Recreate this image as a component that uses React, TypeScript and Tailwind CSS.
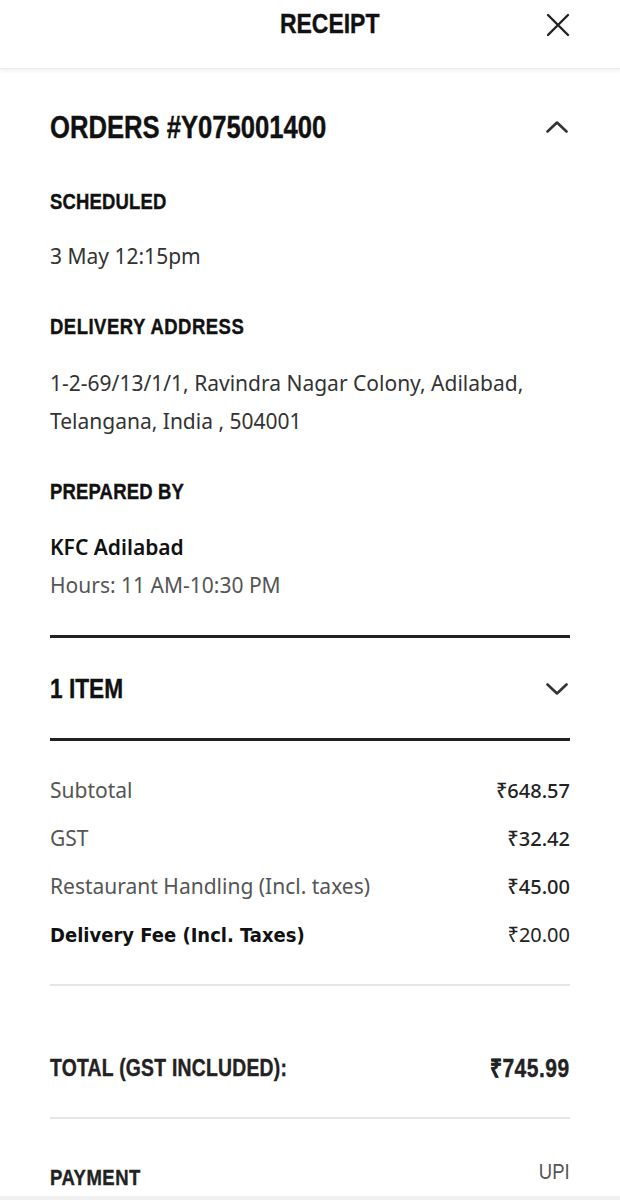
import React from "react";

const cond = { fontFamily: '"Liberation Sans", Arial, sans-serif' };

function Chevron({ up }: { up?: boolean }) {
  return (
    <svg width="22" height="12" viewBox="0 0 22 12" fill="none">
      <path
        d={up ? "M1.5 10.5 L11 1.5 L20.5 10.5" : "M1.5 1.5 L11 10.5 L20.5 1.5"}
        stroke="#333"
        strokeWidth="2.6"
        strokeLinecap="round"
        strokeLinejoin="round"
      />
    </svg>
  );
}

function H({
  children,
  className = "",
  right,
}: {
  children: React.ReactNode;
  className?: string;
  right?: boolean;
}) {
  return (
    <div
      style={cond}
      className={`font-bold uppercase text-[#111] whitespace-nowrap [-webkit-text-stroke:0.4px] ${className}`}
    >
      <span className={`inline-block scale-x-[0.84] ${right ? "origin-right" : "origin-left"}`}>{children}</span>
    </div>
  );
}

export default function App() {
  const body = { fontFamily: '"Noto Sans", "Open Sans", sans-serif' };
  return (
    <div className="w-[620px] h-[1200px] bg-white overflow-hidden relative" style={body}>
      <header className="h-[69px] flex items-start justify-center pt-[10px] relative shadow-[0_2px_4px_rgba(0,0,0,0.06)] border-b border-[#ececec]">
        <div
          style={cond}
          className="font-bold text-[28px] leading-none text-[#111] ml-[40px] [-webkit-text-stroke:0.4px]"
        >
          <span className="inline-block scale-x-[0.82] origin-center">RECEIPT</span>
        </div>
        <svg className="absolute right-[50px] top-[13px]" width="24" height="24" viewBox="0 0 24 24" fill="none">
          <path d="M2 2 L22 22 M22 2 L2 22" stroke="#222" strokeWidth="2.4" strokeLinecap="round" />
        </svg>
      </header>

      <main className="px-[50px]">
        <div className="mt-[42px] flex items-center justify-between h-[32px]">
          <H className="text-[30.5px] leading-[32px]">ORDERS #Y075001400</H>
          <div className="mr-[2px]">
            <Chevron up />
          </div>
        </div>

        <H className="mt-[47px] text-[22px] leading-[24px] tracking-[0.2px]">Scheduled</H>
        <div className="mt-[28px] text-[21px] leading-[28px] text-[#333]">3 May 12:15pm</div>

        <H className="mt-[45px] text-[22px] leading-[24px] tracking-[0.6px]">Delivery Address</H>
        <div className="mt-[25px] text-[21px] leading-[38px] text-[#333]">
          1-2-69/13/1/1, Ravindra Nagar Colony, Adilabad,
          <br />
          Telangana, India , 504001
        </div>

        <H className="mt-[40px] text-[22px] leading-[24px] tracking-[0.2px]">Prepared By</H>
        <div className="mt-[24px] text-[21px] leading-[38px] font-semibold text-[#111]">KFC Adilabad</div>
        <div className="text-[21px] leading-[38px] text-[#555]">Hours: 11 AM-10:30 PM</div>

        <div className="mt-[31px] h-[3px] bg-[#222]" />

        <div className="mt-[35px] flex items-center justify-between h-[32px]">
          <H className="text-[27px] leading-[32px]">1 Item</H>
          <div className="mr-[2px]">
            <Chevron />
          </div>
        </div>

        <div className="mt-[33px] h-[3px] bg-[#222]" />

        <div className="mt-[26px]">
          {[
            ["Subtotal", "₹648.57"],
            ["GST", "₹32.42"],
            ["Restaurant Handling (Incl. taxes)", "₹45.00"],
          ].map(([l, v]) => (
            <div key={l} className="h-[48px] flex items-center justify-between text-[21px]">
              <span className="text-[#555]">{l}</span>
              <span className="text-[#222] font-medium text-[20px]">{v}</span>
            </div>
          ))}
          <div className="h-[48px] flex items-center justify-between text-[20px]">
            <span
              className="text-[#111] font-bold"
              style={{ fontFamily: '"DejaVu Sans Condensed", "DejaVu Sans", sans-serif', fontStretch: "condensed" }}
            >
              Delivery Fee (Incl. Taxes)
            </span>
            <span className="text-[#222] text-[20px]">₹20.00</span>
          </div>
        </div>

        <div className="mt-[25px] h-[2px] bg-[#e6e6e6]" />

        <div className="mt-[68px] flex items-center justify-between h-[28px]">
          <H className="text-[23px] leading-[28px] text-[#222] tracking-[0.3px]">TOTAL (GST INCLUDED):</H>
          <H right className="text-[25px] leading-[28px] text-[#222] tracking-[0.6px]">
            ₹745.99
          </H>
        </div>

        <div className="mt-[35px] h-[2px] bg-[#e6e6e6]" />

        <div className="mt-[47px] flex items-start justify-between h-[24px]">
          <H className="text-[22px] leading-[24px] text-[#222] tracking-[0.6px]">Payment</H>
          <div style={cond} className="text-[22px] leading-[24px] text-[#555] -mt-[6px]">
            <span className="inline-block scale-x-[0.84] origin-right">UPI</span>
          </div>
        </div>
      </main>
      <div className="absolute bottom-0 left-0 right-0 h-[4px] bg-[#f0f0f0]" />
    </div>
  );
}
